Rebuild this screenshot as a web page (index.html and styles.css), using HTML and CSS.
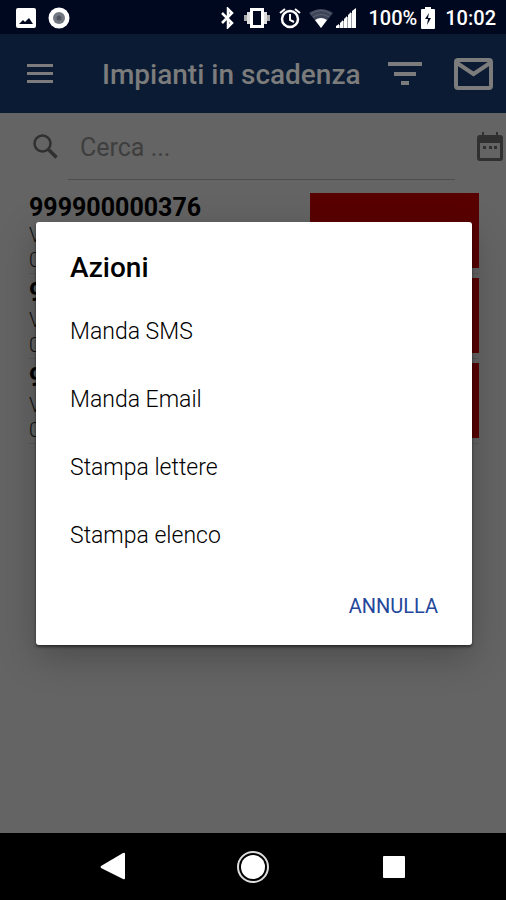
FILE: index.html
```html
<!DOCTYPE html>
<html lang="it">
<head>
<meta charset="utf-8">
<meta name="viewport" content="width=device-width, initial-scale=1">
<title>Impianti in scadenza</title>
<link rel="stylesheet" href="styles.css">
</head>
<body>
<div class="status">
  <div class="status-group notifications">
    <svg width="20" height="20" viewBox="0 0 20 20"><rect width="20" height="20" rx="2" fill="#fff"/><path d="M3 16l4-4 2 2 4-4 4 6z" fill="#000820"/></svg>
    <svg width="22" height="22" viewBox="0 0 22 22"><circle cx="11" cy="11" r="10.5" fill="#fff"/><circle cx="11" cy="11" r="6" fill="#737780"/><circle cx="11" cy="11" r="2.5" fill="#50545f"/></svg>
  </div>
  <div class="status-group">
    <svg width="14" height="22" viewBox="0 0 14 22" fill="none" stroke="#fff" stroke-width="2.5"><path d="M1 6l10 10-4 4V2l4 4L1 16"/></svg>
    <svg class="vibrate" width="28" height="22" viewBox="0 0 28 22"><rect x="8.500" y="2.500" width="11" height="17" fill="none" stroke="#fff" stroke-width="3"/><path d="M4 5h3v12H4zM21 5h3v12h-3z" fill="#ddd"/><path d="M1 8h3v6H1zM24 8h3v6h-3z" fill="#aaa"/></svg>
    <svg class="alarm" width="22" height="22" viewBox="0 0 22 22" fill="none" stroke="#fff" stroke-width="2.5"><circle cx="11" cy="12" r="8"/><path d="M11 7v6l4 2M1 6l5-4M21 6l-5-4" stroke-width="2"/></svg>
    <svg class="wifi" width="24" height="20" viewBox="0 0 24 20"><path d="M0 5Q12-3 24 5L12 20z" fill="#3d4458"/><path d="M2 6q10-7 20 0M4 9q8-5 16 0" fill="none" stroke="#5e6476"/><path d="M6 12q6-4 12 0l-6 8z" fill="#fff"/></svg>
    <svg class="signal" width="21" height="20" viewBox="0 0 21 20"><path d="M0 20v-2l3-2v4zM4 20v-5l3-3v8zM8 20v-9l3-3v12zM12 20V7l3-3v16zM16 20V3l4-3v20z" fill="#fff"/><path d="M3 17h1v3H3zM7 13h1v7H7zM11 9h1v11h-1zM15 5h1v15h-1z" fill="#999da8"/></svg>
    <span>100%</span>
    <svg class="battery" width="14" height="22" viewBox="0 0 14 22"><path d="M4 0h6v2h3q1 0 1 1v18q0 1-1 1H1q-1 0-1-1V3q0-1 1-1h3z" fill="#fff"/><path d="M8 6l-4 6h3l-1 6 4-7H7z" fill="#000820"/></svg>
    <span>10:02</span>
  </div>
</div>
<main class="screen">
  <header class="toolbar">
    <button class="icon-btn menu" aria-label="Menu"><svg width="26" height="20" viewBox="0 0 26 20"><path d="M0 0h26v3H0zM0 8h26v3H0zM0 16h26v3H0z" fill="currentColor"/></svg></button>
    <h1>Impianti in scadenza</h1>
    <button class="icon-btn filter" aria-label="Filtra"><svg width="34" height="24" viewBox="0 0 34 24"><path d="M0 0h34v4H0zM6 10h22v4H6zM13 19h8v4h-8z" fill="currentColor"/></svg></button>
    <button class="icon-btn" aria-label="Messaggi"><svg width="39" height="32" viewBox="0 0 39 32" fill="none" stroke="currentColor" stroke-width="4"><rect x="2" y="2" width="35" height="28" rx="2"/><path d="M3 5l16.500 11L36 5"/></svg></button>
  </header>
  <div class="search">
    <label class="search-icon" for="cerca" aria-label="Cerca"><svg width="25" height="25" viewBox="0 0 25 25" fill="none" stroke="#303030" stroke-width="2.5"><circle cx="9.500" cy="9.500" r="8"/><path d="M15 15l8.500 8.500" stroke-width="3.500"/></svg></label>
    <input id="cerca" type="text" placeholder="Cerca ...">
    <button class="icon-btn calendar" aria-label="Calendario"><svg width="26" height="29" viewBox="0 0 26 29"><path d="M5 0h2v3h12V0h2v3h2q3 0 3 3v20q0 3-3 3H3q-3 0-3-3V6q0-3 3-3h2zM3 11v15h20V11z" fill="#303030" fill-rule="evenodd"/><path d="M6 14h3v3H6zM12 14h3v3h-3zM17 14h3v3h-3z" fill="#303030"/></svg></button>
  </div>
  <ul class="list">
    <li><div class="info"><h2>999900000376</h2><p>V</p><p>0</p></div><div class="flag"></div></li>
    <li><div class="info"><h2>9</h2><p>V</p><p>0</p></div><div class="flag"></div></li>
    <li><div class="info"><h2>9</h2><p>V</p><p>0</p></div><div class="flag"></div></li>
  </ul>
  <div class="overlay">
    <section class="dialog" role="dialog" aria-labelledby="azioni">
      <h2 id="azioni">Azioni</h2>
      <button class="action">Manda SMS</button>
      <button class="action">Manda Email</button>
      <button class="action">Stampa lettere</button>
      <button class="action">Stampa elenco</button>
      <button class="cancel">ANNULLA</button>
    </section>
  </div>
</main>
<nav class="navbar">
  <button class="icon-btn" aria-label="Indietro"><svg width="32" height="32" viewBox="0 0 32 32"><path d="M5 15L27 2q2-1 2 1v24q0 2-2 1L5 17q-1-1 0-2z" fill="#fff"/></svg></button>
  <button class="icon-btn" aria-label="Home"><svg width="32" height="32" viewBox="0 0 32 32"><circle cx="16" cy="16" r="15" fill="none" stroke="#ddd" stroke-width="2"/><circle cx="16" cy="16" r="12" fill="#fff"/></svg></button>
  <button class="icon-btn" aria-label="Recenti"><svg width="32" height="32" viewBox="0 0 32 32"><rect x="5" y="5" width="22" height="22" rx="1" fill="#fff"/></svg></button>
</nav>
</body>
</html>
```
FILE: styles.css
```css
* { box-sizing: border-box; margin: 0; padding: 0; }
body {
  min-height: 100vh;
  display: flex;
  flex-direction: column;
  background: #646464;
  font-family: Roboto, "Liberation Sans", sans-serif;
  color: #000;
}
svg { display: block; flex: none; }
button { font: inherit; color: inherit; background: none; border: 0; }

.status {
  height: 34px;
  padding: 0 10px 0 16px;
  display: flex;
  align-items: center;
  justify-content: space-between;
  background: #000820;
  color: #fff;
  font-size: 20px;
  font-weight: 500;
  line-height: 24px;
}
.status-group { display: flex; align-items: center; padding-top: 2px; }
.notifications { gap: 12px; }
.vibrate { margin-left: 8px; }
.alarm { margin: 0 8px; }
.signal { margin: 0 11px 0 3px; }
.battery { margin: 0 10px 0 4px; }

.screen { flex: 1; position: relative; }
.toolbar {
  height: 79px;
  padding: 0 13px 0 27px;
  display: flex;
  align-items: center;
  background: #0a1b33;
  color: #7c7c7c;
}
.toolbar h1 { flex: 1; margin-left: 49px; padding-top: 2px; font-size: 28px; font-weight: 500; line-height: 32px; white-space: nowrap; }
.filter { margin-right: 32px; }

.search { display: flex; align-items: center; padding: 0 3px 0 33px; }
.search input {
  flex: 1;
  min-width: 0;
  height: 67px;
  margin: 0 22px 0 10px;
  padding: 2px 12px 0;
  border: 0;
  border-bottom: 1px solid #4d4d4d;
  background: none;
  font: 400 25px Roboto, "Liberation Sans", sans-serif;
  color: #000;
}
.search input::placeholder { color: #3e3e3e; opacity: 1; }

.list { list-style: none; padding: 13px 27px 0 29px; }
.list li { display: flex; justify-content: space-between; margin-bottom: 4px; border-bottom: 1px solid #5a5a5a; }
.info h2 { font-size: 25px; font-weight: 700; line-height: 30px; }
.info p { font-size: 20px; font-weight: 300; line-height: 25px; color: #111; }
.flag { width: 169px; height: 75px; background: #590000; }

.overlay {
  position: absolute;
  inset: 0;
  display: flex;
  align-items: center;
  justify-content: center;
  padding: 0 34px 0 36px;
}
.dialog {
  width: 100%;
  display: flex;
  flex-direction: column;
  padding: 28px 34px 20px;
  border-radius: 3px;
  background: #fff;
  box-shadow: 0 2px 3px rgba(0, 0, 0, .5), 0 12px 36px rgba(0, 0, 0, .25);
}
.dialog h2 { margin-bottom: 12px; font-size: 28px; font-weight: 500; line-height: 35px; }
.action { height: 68px; text-align: left; font-size: 23px; font-weight: 300; color: #000; }
.cancel { align-self: flex-end; height: 38px; margin-top: 18px; font-size: 20px; font-weight: 400; color: #23479b; }

.navbar { height: 67px; padding: 0 96px; display: flex; align-items: center; justify-content: space-between; background: #000; }
```
